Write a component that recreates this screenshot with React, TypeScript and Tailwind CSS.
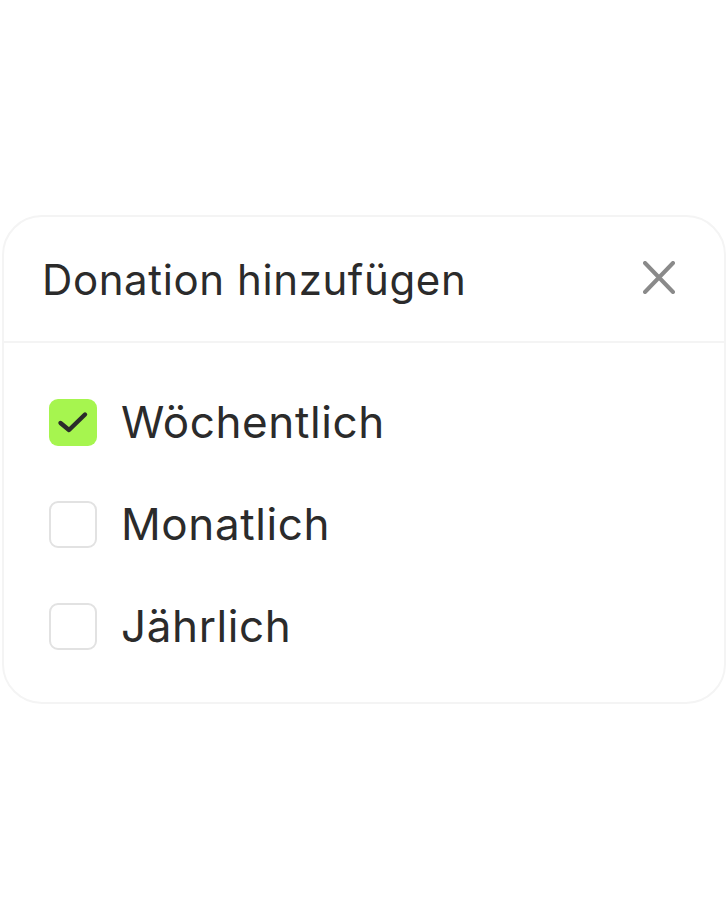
import React from "react";

const items = [
  { label: "Wöchentlich", checked: true },
  { label: "Monatlich", checked: false },
  { label: "Jährlich", checked: false },
];

export default function App() {
  return (
    <div
      className="min-h-[920px] w-[727px] bg-white pt-[215px] pl-[2px]"
      style={{ fontFamily: "Inter, 'Noto Sans', sans-serif" }}
    >
      <div className="w-[724px] h-[489px] rounded-[40px] border-2 border-[#f4f4f4] bg-white overflow-hidden">
        <div className="h-[126px] border-b-2 border-[#f4f4f4] flex items-center justify-between pl-[38px] pr-[49px]">
          <h1 className="text-[42px] leading-none text-[#2b2b2b] font-normal tracking-[0.6px] mt-[2px]">
            Donation hinzufügen
          </h1>
          <button className="w-[32px] h-[33px] -mt-[3px] flex items-center justify-center">
            <svg width="32" height="33" viewBox="0 0 32 33" fill="none">
              <path
                d="M2 2L30 31M30 2L2 31"
                stroke="#8a8a8a"
                strokeWidth="4"
                strokeLinecap="round"
              />
            </svg>
          </button>
        </div>
        <div className="flex flex-col gap-[54px] pt-[55px] pl-[45px]">
          {items.map((it) => (
            <div key={it.label} className="flex items-center gap-[24px] h-[48px]">
              {it.checked ? (
                <div className="w-[48px] h-[47px] rounded-[9px] bg-[#a6f54f] flex items-center justify-center">
                  <svg width="48" height="47" viewBox="0 0 48 47" fill="none">
                    <path
                      d="M11.5 24L20 31L36 15.5"
                      stroke="#2b2b2b"
                      strokeWidth="4.4"
                      strokeLinecap="round"
                      strokeLinejoin="round"
                    />
                  </svg>
                </div>
              ) : (
                <div className="w-[48px] h-[47px] rounded-[9px] border-2 border-[#e2e2e2] bg-white" />
              )}
              <span className="text-[44px] leading-none text-[#2b2b2b] tracking-[0.6px]">{it.label}</span>
            </div>
          ))}
        </div>
      </div>
    </div>
  );
}
